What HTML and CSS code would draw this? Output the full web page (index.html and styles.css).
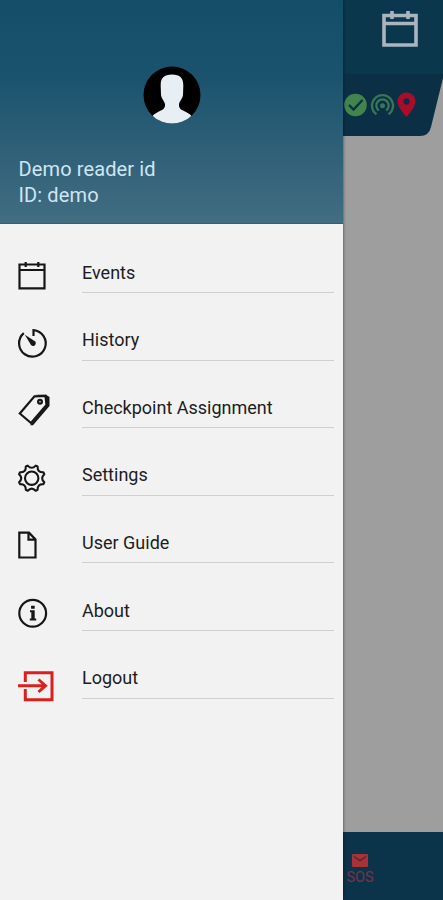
FILE: index.html
```
<!DOCTYPE html>
<html lang="en">
<head>
<meta charset="utf-8">
<title>Menu</title>
<link rel="stylesheet" href="styles.css">
</head>
<body>
<div class="app">
  <aside class="drawer">
    <header class="profile">
      <svg class="avatar" viewBox="0 0 58 58">
        <defs><clipPath id="disc"><circle cx="29" cy="29" r="28.5"/></clipPath></defs>
        <circle cx="29" cy="29" r="28.5" fill="#000"/>
        <path clip-path="url(#disc)" fill="#e8eff4" d="M29 8.5C21 8.500 17.500 12 17.700 20L18 29C18.500 33 21 34 22 38C22.500 43 19 44 15 46C12 47.500 10 49 9 51L14 58H44L49 51C48 49 46 47.500 43 46C39 44 35.500 43 36 38C37 34 39.500 33 40 29L40.300 20C40.500 12 37 8.500 29 8.500Z"/>
      </svg>
      <div class="name">Demo reader id</div>
      <div class="name">ID: demo</div>
    </header>
    <nav class="menu">
      <a class="item"><svg class="icon" viewBox="0 0 36 36"><path d="M1.500 7.500H26.500V31.300H1.500ZM1.500 13H26.500M7.700 5V10M20.300 5V10"/></svg><span class="label">Events</span></a>
      <a class="item"><svg class="icon" viewBox="0 0 36 36"><path d="M5.800 8.200A13.300 13.300 0 1 0 15.500 5.100V11"/><path class="solid" d="M6.800 9.800L17.300 16.400C19 19.500 15.500 22.500 13 20Z"/></svg><span class="label">History</span></a>
      <a class="item"><svg class="icon" viewBox="0 0 36 36"><path d="M1.800 21.500L16.500 4.300L27.500 3.800L28.500 13L13 31Z"/><path class="solid" d="M17.500 2.700H28L31.500 5V14L15 33.200H12L28 14.500L27.700 4Z"/><circle cx="22" cy="9.800" r="1.900"/></svg><span class="label">Checkpoint Assignment</span></a>
      <a class="item"><svg class="icon gear" viewBox="0 0 36 36"><path d="M9.700 5.600Q13.700 10 17.700 5.600L19.600 6.500Q19.300 12.600 25.400 12.300L26.300 14.200Q22 18.200 26.300 22.200L25.400 24.100Q19.300 23.800 19.600 29.900L17.700 30.800Q13.700 26.400 9.700 30.800L7.800 29.900Q8.100 23.800 2 24.100L1.100 22.200Q5.400 18.200 1.100 14.200L2 12.300Q8.100 12.600 7.800 6.500Z"/><circle cx="13.700" cy="18.200" r="6.700"/></svg><span class="label">Settings</span></a>
      <a class="item"><svg class="icon" viewBox="0 0 36 36"><path d="M1.300 5.700H11L17.500 12.500V30.500H1.300ZM10.500 5.700V12.700H17.500"/></svg><span class="label">User Guide</span></a>
      <a class="item"><svg class="icon" viewBox="0 0 36 36"><circle cx="14.700" cy="18.200" r="13.400"/><path class="solid" d="M12 15.300H16.700V23.500H18.200V25.500H11.800V23.500H13.300V17.300H12ZM13.100 10.800H16.700V13.800H13.100Z"/></svg><span class="label">About</span></a>
      <a class="item"><svg class="icon logout" viewBox="0 0 36 36"><path d="M7.300 19V9.700H34V36.700H7.300V26M0 22.700H27M20.500 16.500L27.500 22.700L20.500 29"/></svg><span class="label">Logout</span></a>
    </nav>
  </aside>
  <main class="page">
    <div class="topbar">
      <svg class="calendar" viewBox="0 0 38 38"><path d="M3 5.500H35V35H3ZM3 13.500H35M11 1V9M27 1V9"/></svg>
    </div>
    <svg class="status" viewBox="0 0 100 62" width="100" height="62">
      <path fill="#0b3045" d="M0 0H100V4L88 53Q86 62 77 62H0Z"/>
      <circle cx="12.500" cy="31" r="11.300" fill="#43834c"/>
      <path d="M6 31L10.500 35.500L19.500 26" fill="none" stroke="#0b3045" stroke-width="2.300"/>
      <g fill="none" stroke="#38765a" stroke-width="2.300">
        <path d="M33.500 40.300A10.500 10.500 0 1 1 45.500 40.300"/>
        <path d="M35.800 36.500A6.200 6.200 0 1 1 43.200 36.500"/>
      </g>
      <circle cx="39.500" cy="31.700" r="2.500" fill="#38765a"/>
      <path fill="#a80d2a" fill-rule="evenodd" d="M63.500 18.500C58.500 18.500 54.500 22.300 54.500 27.500C54.500 33.500 63.500 43 63.500 43S72.500 33.500 72.500 27.500C72.500 22.300 68.500 18.500 63.500 18.500ZM63.500 24.300A3.100 3.100 0 1 1 63.500 30.500A3.100 3.100 0 1 1 63.500 24.300Z"/>
    </svg>
    <div class="bottombar">
      <div class="sos">
        <svg class="mail" viewBox="0 0 16 13"><rect width="16" height="13" rx="1" fill="#a83238"/><path d="M2 2.500L8 6.500L14 2.500" fill="none" stroke="#4c2937" stroke-width="1.500"/></svg>
        <span>SOS</span>
      </div>
    </div>
  </main>
</div>
</body>
</html>
```
FILE: styles.css
```
* { box-sizing: border-box; }
body { margin: 0; font-family: Roboto, sans-serif; }
.app { display: flex; width: 443px; height: 900px; overflow: hidden; }
.drawer {
  width: 343px;
  flex: none;
  background: #f2f2f2;
  box-shadow: 0 0 3px rgba(0, 0, 0, .6);
  z-index: 1;
}
.profile {
  height: 224px;
  padding: 66px 18.5px 0;
  background: linear-gradient(#134e69, #1b536e 35%, #426d82);
  border-bottom: 1px solid #315f6b;
}
.avatar { display: block; width: 58px; height: 58px; margin: 0 auto 32px 124.500px; }
.name { font-size: 20px; line-height: 26px; letter-spacing: .12px; color: #cfe6f2; white-space: nowrap; }
.menu { padding-top: 1.4px; }
.item { display: flex; align-items: flex-end; height: 67.6px; padding: 0 9px 0 18px; }
.icon {
  width: 36px;
  height: 36px;
  margin-right: 28px;
  flex: none;
  overflow: visible;
  fill: none;
  stroke: #161616;
  stroke-width: 2.2;
}
.icon .solid { fill: #161616; stroke: none; }
.gear { stroke-width: 2.1; stroke-linejoin: round; }
.logout { stroke: #d9201f; stroke-width: 3; }
.label {
  flex: 1;
  height: 36px;
  padding-top: 4.6px;
  font-size: 18px;
  line-height: 22px;
  color: #1d1d1d;
  border-bottom: 1px solid #d0d0d0;
  white-space: nowrap;
}
.page { flex: 1; display: flex; flex-direction: column; background: #9e9e9e; }
.topbar { height: 74px; padding: 10px 0 0 38px; background: #0b374c; }
.calendar { display: block; width: 38px; height: 38px; fill: none; stroke: #a9b5bf; stroke-width: 3.6; }
.status { display: block; }
.bottombar { height: 68px; margin-top: auto; padding: 22px 0 0 1px; background: #0b344a; }
.sos { display: flex; flex-direction: column; align-items: center; width: 32px; font-size: 14.500px; line-height: 17px; color: #79324a; }
.mail { width: 16px; height: 13px; margin-bottom: 2px; }
```
